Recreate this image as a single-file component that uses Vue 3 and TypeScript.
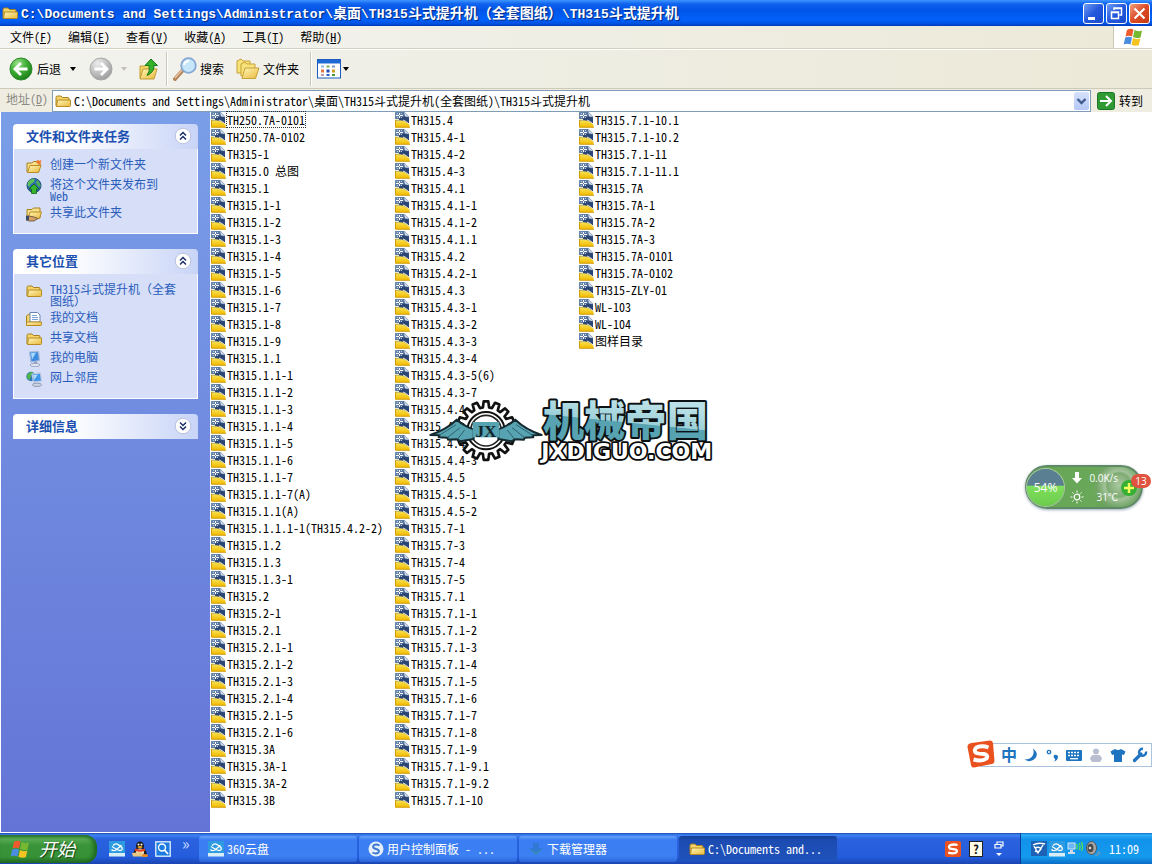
<script setup lang="ts">
import { h, ref } from 'vue'

interface Run { text: string; wide: boolean }
interface MenuEntry { label: string; key: string }
interface Place { icon: string; label: string }
interface Task { icon: string; label: string; active?: boolean }

const path = 'C:\\Documents and Settings\\Administrator\\桌面\\TH315斗式提升机（全套图纸）\\TH315斗式提升机'
const address = ref(path)

function splitRuns(text: string): Run[] {
  const parts = text.match(/[\u0000-\u00ff]+|[^\u0000-\u00ff]+/g) ?? []
  return parts.map((t) => ({ text: t, wide: t.charCodeAt(0) > 255 }))
}

const Mixed = (props: { text: string }) =>
  h('span', splitRuns(props.text).map((r) => h('span', { class: r.wide ? 'wide' : 'latin' }, r.text)))
Mixed.props = ['text']

const menus: MenuEntry[] = [
  { label: '文件', key: 'F' },
  { label: '编辑', key: 'E' },
  { label: '查看', key: 'V' },
  { label: '收藏', key: 'A' },
  { label: '工具', key: 'T' },
  { label: '帮助', key: 'H' },
]

const fileTasks: Place[] = [
  { icon: 'i-newfolder', label: '创建一个新文件夹' },
  { icon: 'i-globe', label: '将这个文件夹发布到 Web' },
  { icon: 'i-share', label: '共享此文件夹' },
]
const places: Place[] = [
  { icon: 'i-folder', label: 'TH315斗式提升机（全套图纸）' },
  { icon: 'i-docs', label: '我的文档' },
  { icon: 'i-folder', label: '共享文档' },
  { icon: 'i-computer', label: '我的电脑' },
  { icon: 'i-network', label: '网上邻居' },
]

const files: string[] = [
  'TH250.7A-0101', 'TH250.7A-0102', 'TH315-1', 'TH315.0 总图', 'TH315.1', 'TH315.1-1', 'TH315.1-2', 'TH315.1-3',
  'TH315.1-4', 'TH315.1-5', 'TH315.1-6', 'TH315.1-7', 'TH315.1-8', 'TH315.1-9', 'TH315.1.1', 'TH315.1.1-1',
  'TH315.1.1-2', 'TH315.1.1-3', 'TH315.1.1-4', 'TH315.1.1-5', 'TH315.1.1-6', 'TH315.1.1-7', 'TH315.1.1-7(A)',
  'TH315.1.1(A)', 'TH315.1.1.1-1(TH315.4.2-2)', 'TH315.1.2', 'TH315.1.3', 'TH315.1.3-1', 'TH315.2', 'TH315.2-1',
  'TH315.2.1', 'TH315.2.1-1', 'TH315.2.1-2', 'TH315.2.1-3', 'TH315.2.1-4', 'TH315.2.1-5', 'TH315.2.1-6',
  'TH315.3A', 'TH315.3A-1', 'TH315.3A-2', 'TH315.3B',
  'TH315.4', 'TH315.4-1', 'TH315.4-2', 'TH315.4-3', 'TH315.4.1', 'TH315.4.1-1', 'TH315.4.1-2', 'TH315.4.1.1',
  'TH315.4.2', 'TH315.4.2-1', 'TH315.4.3', 'TH315.4.3-1', 'TH315.4.3-2', 'TH315.4.3-3', 'TH315.4.3-4',
  'TH315.4.3-5(6)', 'TH315.4.3-7', 'TH315.4.4', 'TH315.4.4-1', 'TH315.4.4-2', 'TH315.4.4-3', 'TH315.4.5',
  'TH315.4.5-1', 'TH315.4.5-2', 'TH315.7-1', 'TH315.7-3', 'TH315.7-4', 'TH315.7-5', 'TH315.7.1', 'TH315.7.1-1',
  'TH315.7.1-2', 'TH315.7.1-3', 'TH315.7.1-4', 'TH315.7.1-5', 'TH315.7.1-6', 'TH315.7.1-7', 'TH315.7.1-8',
  'TH315.7.1-9', 'TH315.7.1-9.1', 'TH315.7.1-9.2', 'TH315.7.1-10',
  'TH315.7.1-10.1', 'TH315.7.1-10.2', 'TH315.7.1-11', 'TH315.7.1-11.1', 'TH315.7A', 'TH315.7A-1', 'TH315.7A-2',
  'TH315.7A-3', 'TH315.7A-0101', 'TH315.7A-0102', 'TH315-ZLY-01', 'WL-103', 'WL-104', '图样目录',
]

const tasks: Task[] = [
  { icon: 'i-cloud', label: '360云盘' },
  { icon: 'i-sbrowser', label: '用户控制面板 - ...' },
  { icon: 'i-down', label: '下载管理器' },
  { icon: 'i-folder', label: 'C:\\Documents and...', active: true },
]

const open = ref({ tasks: true, places: true, details: false })

function gearPath(cx: number, cy: number, inner: number, outer: number, teeth: number): string {
  const pts: string[] = []
  const step = (Math.PI * 2) / teeth
  for (let i = 0; i < teeth; i++) {
    const a = i * step - Math.PI / 2
    const corners: [number, number][] = [
      [-0.34, inner], [-0.2, outer], [0.2, outer], [0.34, inner],
    ]
    for (const [f, r] of corners) {
      pts.push(`${(cx + Math.cos(a + f * step) * r).toFixed(1)} ${(cy + Math.sin(a + f * step) * r).toFixed(1)}`)
    }
  }
  return `M${pts.join('L')}Z`
}
const gear = gearPath(198, 122, 70, 88, 16)
</script>

<template>
  <div class="desktop">
    <svg class="defs" width="0" height="0" aria-hidden="true">
      <defs>
        <linearGradient id="gFold" x1="0" y1="0" x2="1" y2="1"><stop offset="0" stop-color="#fff6b8" /><stop offset="1" stop-color="#e9b93c" /></linearGradient>
        <radialGradient id="gGreen" cx=".35" cy=".25" r=".8"><stop offset="0" stop-color="#9be08a" /><stop offset=".5" stop-color="#3fae35" /><stop offset="1" stop-color="#1a7c18" /></radialGradient>
        <radialGradient id="gGray" cx=".35" cy=".25" r=".8"><stop offset="0" stop-color="#ececec" /><stop offset=".6" stop-color="#bcbcbc" /><stop offset="1" stop-color="#999" /></radialGradient>
        <linearGradient id="gYel" x1="0" y1="0" x2="0" y2="1"><stop offset="0" stop-color="#f8e25a" /><stop offset="1" stop-color="#f2bc00" /></linearGradient>
        <linearGradient id="gPage" x1="0" y1="0" x2="1" y2="1"><stop offset="0" stop-color="#6f8fb4" /><stop offset="1" stop-color="#2c4876" /></linearGradient>
        <linearGradient id="gTeal" gradientUnits="userSpaceOnUse" x1="641" y1="40" x2="629" y2="160"><stop offset="0" stop-color="#b9e0e6" /><stop offset=".48" stop-color="#9ed0d9" /><stop offset=".5" stop-color="#57a3b1" /><stop offset="1" stop-color="#57a3b1" /></linearGradient>
      </defs>
      <symbol id="i-folder" viewBox="0 0 16 16">
        <path d="M1 13V4.500Q1 3 2.500 3H6L7.500 4.500H13Q14 4.500 14 6V13Z" fill="#f3d468" stroke="#a87f1f" />
        <path d="M1.500 13.500L2.500 7H15.500V12.500Q15.500 13.500 14.500 13.500Z" fill="url(#gFold)" stroke="#b88c22" />
      </symbol>
      <symbol id="i-newfolder" viewBox="0 0 16 16">
        <path d="M1 14V5H6L7.500 3.500H13V13Z" fill="#f6e08a" stroke="#a87f1f" />
        <path d="M1.500 14.500L4 7.500H15L12.500 14.500Z" fill="url(#gFold)" stroke="#b88c22" />
        <path d="M10 4L12 1.500L13 3L15.500 2L14.500 5L15.500 7L12 6Z" fill="#f07a2a" />
      </symbol>
      <symbol id="i-share" viewBox="0 0 16 16">
        <path d="M1 12V3.500H6L7.500 2H14V12Z" fill="#f6e08a" stroke="#a87f1f" />
        <path d="M2 12.500L4 6H15.500L13.500 12.500Z" fill="url(#gFold)" stroke="#b88c22" />
        <path d="M0 10H3L8 11L12 12.500L8 15H3L0 14Z" fill="#d9a066" stroke="#5a4a3a" stroke-width=".8" />
        <path d="M0 10H3V14H0Z" fill="#3a4a6a" />
      </symbol>
      <symbol id="i-globe" viewBox="0 0 16 16">
        <circle cx="8" cy="7.500" r="7" fill="#2c6ab4" stroke="#1d4a80" />
        <path d="M2 4Q5 0 9 1L8 4L5 6L3 9L1.500 7Z" fill="#5cc05a" /><path d="M11 2Q15 5 14.500 9L12 8L10 5Z" fill="#4caf50" />
        <path d="M8 6L13 11H10.500V15.500H5.500V11H3Z" fill="#35b52e" stroke="#176312" stroke-width=".8" />
      </symbol>
      <symbol id="i-docs" viewBox="0 0 16 16">
        <path d="M.5 14V5L3 3H5V14Z" fill="#f3d468" stroke="#a87f1f" />
        <path d="M4 11V1.500H11.500L14 4V11Z" fill="#fff" stroke="#6a86b4" /><path d="M6 4.500H11M6 6.500H12M6 8.500H12" stroke="#7aa0d8" />
        <path d="M.5 14.500V11H15.500V13.500Q15.500 14.500 14.500 14.500Z" fill="url(#gFold)" stroke="#b88c22" />
      </symbol>
      <symbol id="i-computer" viewBox="0 0 16 16">
        <path d="M3.500 1L12.500 .5L13.500 9.500L5 11Z" fill="#3c8be0" stroke="#a8bcdc" stroke-width="1.200" /><path d="M5 2L10 1.800L6 8.500Z" fill="#a6d8fb" />
        <path d="M8 11L11 10.500V13H8Z" fill="#8e9cb8" /><ellipse cx="9" cy="14" rx="5" ry="1.700" fill="#dfe4ee" stroke="#8e9cb8" stroke-width=".8" />
      </symbol>
      <symbol id="i-network" viewBox="0 0 16 16">
        <circle cx="5" cy="5.500" r="4.700" fill="#3478bc" /><path d="M1 4Q4 0 7 1.500L5 5L4 9L1 7Z" fill="#4fb24c" />
        <path d="M6 3L14.500 2L15.500 10L7.500 11Z" fill="#3f95ea" stroke="#c2cde0" stroke-width="1.200" /><path d="M7 4L12 3.500L8 9Z" fill="#b0defb" />
        <ellipse cx="11" cy="13.800" rx="4.600" ry="1.700" fill="#cdd3e0" stroke="#7e8aa4" stroke-width=".8" />
      </symbol>
      <symbol id="i-dwg" viewBox="0 0 16 16">
        <path d="M0 0H9.500L14 4.500V15H0Z" fill="url(#gPage)" />
        <path d="M9 0L14 5L10 4.500Z" fill="#d4deea" />
        <path d="M5 6Q9 3 14 6V13Q10 9 3 8.500Z" fill="#2b4674" />
        <path d="M.5 15V8.500Q8 7 14.500 12V15Z" fill="url(#gYel)" />
        <path d="M8 8Q11 9 14.500 12.500" fill="none" stroke="#f4f1d8" />
        <path d="M.5 8V15.300H15" fill="none" stroke="#cf9c08" />
        <path d="M4 1H5V3H4ZM4 4H5V6H4ZM1 3H4V4H1ZM5 3H8V4H5Z" fill="#fff" />
        <path d="M2 1H3V2H2ZM6 1H7V2H6ZM2 5H3V6H2ZM6 5H7V6H6Z" fill="#b8c8dc" />
        <path d="M0 7H4V8H0Z" fill="#efe9c0" />
      </symbol>
      <symbol id="i-back" viewBox="0 0 24 24">
        <circle cx="12" cy="12" r="11" fill="url(#gGreen)" stroke="#2c8a28" /><path d="M12 6L6 12L12 18M6.500 12H18.500" fill="none" stroke="#fff" stroke-width="2.800" />
      </symbol>
      <symbol id="i-fwd" viewBox="0 0 24 24">
        <circle cx="12" cy="12" r="11" fill="url(#gGray)" stroke="#a8a8a8" /><path d="M12 6L18 12L12 18M17.500 12H5.500" fill="none" stroke="#fff" stroke-width="2.800" />
      </symbol>
      <symbol id="i-up" viewBox="0 0 20 22">
        <path d="M1 20V8H6L8 6H14V20Z" fill="#f3d468" stroke="#c09a30" /><path d="M1 21L4 11H18L15 21Z" fill="url(#gFold)" stroke="#c09a30" />
        <path d="M12 1L18.500 7.500H15Q15.500 14 8 17.500Q11.500 13 10 7.500H6Z" fill="#36b12c" stroke="#157a14" />
      </symbol>
      <symbol id="i-search" viewBox="0 0 24 24">
        <path d="M2 22L10 13" stroke="#b5835a" stroke-width="4" stroke-linecap="round" /><path d="M2 21L9 13" stroke="#e6c3a2" stroke-width="1.500" />
        <circle cx="15.500" cy="8.500" r="7.300" fill="#c6e6fa" stroke="#86a8d4" stroke-width="1.800" /><path d="M11 8Q12 4 16 4" stroke="#fff" stroke-width="2" fill="none" />
      </symbol>
      <symbol id="i-folders" viewBox="0 0 24 22">
        <path d="M1 15V3L5 1L7 3H14V15Z" fill="#f8e27c" stroke="#c7a136" /><path d="M5 18V6L9 4L11 6H19V18Z" fill="#f8e27c" stroke="#c7a136" />
        <path d="M6 20.500L9 10H23L19.500 20.500Z" fill="url(#gFold)" stroke="#c7a136" />
      </symbol>
      <symbol id="i-views" viewBox="0 0 24 20">
        <rect x=".5" y=".5" width="23" height="18.500" fill="#fff" stroke="#1b5ec0" /><rect x="1" y="1" width="22" height="3.500" fill="#1f69d4" />
        <path d="M4 6.500H7V8.500H4Z" fill="#9bb4dc" /><path d="M9.500 6.500H12.500V8.500H9.500Z" fill="#7a5" /><path d="M15 6.500H18V8.500H15Z" fill="#79b" />
        <path d="M4 10.500H7V13.500H4Z" fill="#e07840" /><path d="M9.500 10.500H12.500V13.500H9.500Z" fill="#1c48b0" /><path d="M15 10.500H18V13.500H15Z" fill="#d0a020" />
        <path d="M4 15H7V17H4Z" fill="#b9a" /><path d="M9.500 15H12.500V17H9.500Z" fill="#2a60c8" /><path d="M15 15H18V17H15Z" fill="#4c9a3c" />
      </symbol>
      <symbol id="i-flag" viewBox="0 0 20 18">
        <path d="M4 2Q7 0 10.500 1.500L9 8.500Q6 7 2.500 8.500Z" fill="#ee5a2c" /><path d="M11.500 2Q15 4 19 2.500L17.500 9.500Q14 11 10 9Z" fill="#76b830" />
        <path d="M2.200 9.500Q5.500 8 9 9.500L7.500 16.500Q4 15 .7 16.500Z" fill="#4a8ce0" /><path d="M10 10Q13.500 12 17.300 10.500L15.800 17.300Q12 18.500 8.500 16.800Z" fill="#f6c420" />
      </symbol>
      <symbol id="i-cloud" viewBox="0 0 16 16">
        <rect width="16" height="12" fill="#2e9be0" /><rect y="12" width="16" height="3.500" fill="#d9edf9" />
        <path d="M4 4.500Q6.500 2 9 3.500L13 6.500Q14 9.500 11 9.500Q9 9.500 3 5.500M12.500 4.500Q9 7 7 9Q4 10.500 2.500 8.500" fill="none" stroke="#fff" stroke-width="1.300" />
      </symbol>
      <symbol id="i-sbrowser" viewBox="0 0 16 16">
        <circle cx="8" cy="8" r="7.500" fill="#e4eefc" /><path d="M11.500 4.500Q8 2.500 5.500 4.500Q4 7 8 8Q12 9 10.500 11.500Q8 13.500 4.500 11.500" fill="none" stroke="#3d78d0" stroke-width="2" />
      </symbol>
      <symbol id="i-down" viewBox="0 0 16 16"><path d="M5 2H11V7H15L8 14L1 7H5Z" fill="#2f78d4" /><path d="M2 8L8 14L14 8L8 11Z" fill="#3a8cb0" /></symbol>
      <symbol id="i-penguin" viewBox="0 0 16 16">
        <ellipse cx="8" cy="5" rx="4" ry="4.500" fill="#1d1a1a" /><path d="M3 8Q8 5 13 8L15 13H1Z" fill="#1d1a1a" /><ellipse cx="8" cy="11" rx="4" ry="3.500" fill="#f4efe0" />
        <path d="M3 7.500Q8 9.500 13 7.500V10Q8 11.500 3 10Z" fill="#e0401c" /><ellipse cx="8" cy="6" rx="2.500" ry="1" fill="#f2b01e" /><circle cx="6.500" cy="3.500" r="1" fill="#fff" /><circle cx="9.500" cy="3.500" r="1" fill="#fff" />
        <path d="M0 12L9 11L12 14V15.500H1Z" fill="#e8c880" /><ellipse cx="13" cy="14.500" rx="3" ry="1.500" fill="#f08a1e" />
      </symbol>
      <symbol id="i-find" viewBox="0 0 16 16"><rect x=".8" y=".8" width="14.400" height="14.400" fill="#1c7be0" stroke="#e6f2fd" stroke-width="1.300" /><circle cx="7" cy="6.500" r="3.500" fill="none" stroke="#fff" stroke-width="1.400" /><path d="M9.500 9L13 13" stroke="#fff" stroke-width="1.800" /></symbol>
      <symbol id="i-sogou" viewBox="0 0 28 28">
        <path d="M4.500 3L23 .5Q25.500 .3 26 3L27.500 21Q27.500 23.500 25 24L7 27.500Q4.500 27.800 4 25L.5 7Q.3 3.800 4.500 3Z" fill="#e9521f" />
        <path d="M21.500 7.500Q15 5 9.500 7.500Q6 10.500 9.500 13Q12 14 17 14Q21.500 15 19.500 18.500Q15 22 6.500 19.500" fill="none" stroke="#fff" stroke-width="4" />
      </symbol>
      <symbol id="i-chev" viewBox="0 0 18 18"><circle cx="9" cy="9" r="7.800" fill="#fff" stroke="#b9c2de" /><path d="M6 8.500L9 5.500L12 8.500M6 12.500L9 9.500L12 12.500" fill="none" stroke="#1b2f66" stroke-width="1.500" /></symbol>
    </svg>

    <header class="titlebar">
      <svg class="ic16"><use href="#i-folder" /></svg>
      <h1><Mixed :text="path" /></h1>
      <button class="win" aria-label="最小化"><svg viewBox="0 0 19 19"><path d="M4 13H11V16H4Z" fill="#fff" /></svg></button>
      <button class="win" aria-label="还原"><svg viewBox="0 0 19 19"><path d="M7 6V4H14.500V11H12.500M7 4.500H14.500M4.500 8H11.500V14.500H4.500ZM4 8.500H12" fill="none" stroke="#fff" stroke-width="1.500" /></svg></button>
      <button class="win close" aria-label="关闭"><svg viewBox="0 0 19 19"><path d="M4.500 4.500L14.500 14.500M14.500 4.500L4.500 14.500" stroke="#fff" stroke-width="2.200" /></svg></button>
    </header>

    <nav class="menubar">
      <button v-for="m in menus" :key="m.key">{{ m.label }}(<u>{{ m.key }}</u>)</button>
      <span class="brand"><svg><use href="#i-flag" /></svg></span>
    </nav>

    <div class="toolbar">
      <button class="tool back"><svg class="ic24"><use href="#i-back" /></svg><span>后退</span></button>
      <button class="drop first" aria-label="后退列表"></button>
      <button class="tool" aria-label="前进"><svg class="ic24"><use href="#i-fwd" /></svg></button>
      <button class="drop pale" aria-label="前进列表"></button>
      <button class="tool up" aria-label="向上"><svg class="ic22"><use href="#i-up" /></svg></button>
      <i class="sep"></i>
      <button class="tool"><svg class="ic24"><use href="#i-search" /></svg><span>搜索</span></button>
      <button class="tool folders"><svg class="ic24"><use href="#i-folders" /></svg><span>文件夹</span></button>
      <i class="sep"></i>
      <button class="tool" aria-label="查看"><svg class="ic24"><use href="#i-views" /></svg></button>
      <button class="drop near" aria-label="查看方式"></button>
    </div>

    <form class="addressbar" @submit.prevent>
      <label for="addr">地址(<u>D</u>)</label>
      <div class="combo">
        <svg class="ic16"><use href="#i-folder" /></svg>
        <input id="addr" v-model="address" type="text" spellcheck="false" />
        <button type="button" class="comboBtn" aria-label="展开"><svg viewBox="0 0 15 18"><path d="M3.500 7L7.500 11L11.500 7" fill="none" stroke="#3f5c8c" stroke-width="2.400" /></svg></button>
      </div>
      <button class="go"><svg viewBox="0 0 18 18"><rect x=".5" y=".5" width="17" height="17" rx="2" fill="#2f9a34" stroke="#1f7526" /><path d="M3 9H14M9 4L14 9L9 14" fill="none" stroke="#fff" stroke-width="2" /></svg><span>转到</span></button>
    </form>

    <main class="content">
      <aside class="pane">
        <section class="box">
          <button class="boxHead" @click="open.tasks = !open.tasks"><span>文件和文件夹任务</span><svg class="ic18"><use href="#i-chev" /></svg></button>
          <ul v-if="open.tasks" class="boxBody">
            <li v-for="t in fileTasks" :key="t.label"><a href="#"><svg class="ic16"><use :href="'#' + t.icon" /></svg><Mixed :text="t.label" /></a></li>
          </ul>
        </section>
        <section class="box">
          <button class="boxHead" @click="open.places = !open.places"><span>其它位置</span><svg class="ic18"><use href="#i-chev" /></svg></button>
          <ul v-if="open.places" class="boxBody">
            <li v-for="p in places" :key="p.label"><a href="#"><svg class="ic16"><use :href="'#' + p.icon" /></svg><Mixed :text="p.label" /></a></li>
          </ul>
        </section>
        <section class="box">
          <button class="boxHead" @click="open.details = !open.details"><span>详细信息</span><svg class="ic18 flip"><use href="#i-chev" /></svg></button>
        </section>
      </aside>

      <ul class="files">
        <li v-for="(f, i) in files" :key="f" :class="{ focused: i === 0 }"><svg class="ic16"><use href="#i-dwg" /></svg><span>{{ f }}</span></li>
      </ul>
    </main>

    <svg class="watermark" viewBox="0 0 930 240" role="img" aria-label="机械帝国 JXDIGUO.COM">
      <path :d="gear" fill="#fff" stroke="#111" stroke-width="8" stroke-linejoin="round" />
      <circle cx="198" cy="122" r="56" fill="#fff" stroke="#111" stroke-width="6" />
      <circle cx="198" cy="122" r="46" fill="none" stroke="#222" stroke-width="5" />
      <g fill="#57a3b1" stroke="#152a30" stroke-width="6" stroke-linejoin="round">
        <path d="M110 89Q132 108 161 118V147L121 154L112 148L84 149L82 143L56 142L58 136L31 135Q80 118 110 89Z" />
        <path d="M286 89Q264 108 235 118V147L275 154L284 148L312 149L314 143L340 142L338 136L365 135Q316 118 286 89Z" />
        <path d="M158 96H238V142H158Z" stroke="none" />
      </g>
      <path d="M108 104L58 136M120 113L82 143M134 120L112 148M288 104L338 136M276 113L314 143M262 120L284 148" stroke="#2d626c" stroke-width="3" />
      <text x="198" y="142" class="jx">JX</text>
      <text x="368" y="139" class="cn">机械帝国</text>
      <text x="364" y="206" class="en">JXDIGUO.COM</text>
    </svg>

    <div class="meter">
      <span class="pct">54%</span>
      <div class="stats">
        <svg viewBox="0 0 14 14"><path d="M5 1H9V7H12L7 12.500L2 7H5Z" fill="#fff" /></svg><span>0.0K/s</span>
        <svg viewBox="0 0 14 14"><circle cx="7" cy="7" r="2.800" fill="none" stroke="#fff" stroke-width="1.200" /><path d="M7 .5V2.500M7 11.500V13.500M.5 7H2.500M11.500 7H13.500M2.400 2.400L3.600 3.600M10.400 10.400L11.600 11.600M2.400 11.600L3.600 10.400M10.400 3.600L11.600 2.400" stroke="#fff" /></svg><span>31℃</span>
      </div>
      <span class="plus"><svg viewBox="0 0 14 14"><path d="M7 2V12M2 7H12" stroke="#f4ff5a" stroke-width="2.500" /></svg></span>
      <span class="badge">13</span>
    </div>

    <div class="ime">
      <svg class="imeLogo"><use href="#i-sogou" /></svg>
      <button class="cn2">中</button>
      <button aria-label="半角"><svg viewBox="0 0 16 16"><path d="M10 1.500Q16 6 12.500 11Q8 16.500 1.500 12.500Q7 12.500 9.500 9Q11.500 5.500 10 1.500Z" fill="#1f74c0" /></svg></button>
      <button aria-label="标点"><svg viewBox="0 0 16 16"><circle cx="4" cy="5" r="1.700" fill="none" stroke="#1f74c0" stroke-width="1.300" /><path d="M9 8Q12.500 7 13 9.500Q13 13.500 9 14.500Q11 12.500 9.500 11.500Q8 10 9 8Z" fill="#1f74c0" /></svg></button>
      <button aria-label="软键盘"><svg viewBox="0 0 16 16"><rect y="3" width="16" height="11" rx="1" fill="#1f74c0" /><path d="M2 5.500H14M2 8.500H14" stroke="#fff" stroke-width="1.500" stroke-dasharray="2 1" /><path d="M4 11.700H12" stroke="#fff" stroke-width="1.300" /></svg></button>
      <button aria-label="账户"><svg viewBox="0 0 16 16"><circle cx="8" cy="4.500" r="3" fill="#b9bfd0" /><path d="M2 12Q3 7.500 6 8H10Q13 7.500 14 12L12 15H4Z" fill="#b9bfd0" /></svg></button>
      <button aria-label="皮肤"><svg viewBox="0 0 16 16"><path d="M5 2Q8 4 11 2L15.500 4.500L14 8L12 7.500V15H4V7.500L2 8L.5 4.500Z" fill="#1f74c0" /></svg></button>
      <button aria-label="设置"><svg viewBox="0 0 16 16"><path d="M2.500 13.500L9 7" stroke="#1f74c0" stroke-width="3.200" stroke-linecap="round" /><path d="M14 4.500A3.500 3.500 0 1 1 11 1.800" fill="none" stroke="#1f74c0" stroke-width="2.400" /></svg></button>
    </div>

    <footer class="taskbar">
      <button class="start"><svg><use href="#i-flag" /></svg><span>开始</span></button>
      <div class="quick">
        <button aria-label="云盘"><svg class="ic16"><use href="#i-cloud" /></svg></button>
        <button aria-label="QQ"><svg class="ic16"><use href="#i-penguin" /></svg></button>
        <button aria-label="搜索"><svg class="ic16"><use href="#i-find" /></svg></button>
        <span class="more">»</span>
      </div>
      <div class="tasks">
        <button v-for="t in tasks" :key="t.label" class="task" :class="{ active: t.active }"><svg class="ic16"><use :href="'#' + t.icon" /></svg><span>{{ t.label }}</span></button>
      </div>
      <div class="lang">
        <svg class="ic16" viewBox="0 0 28 28"><rect width="28" height="28" rx="3" fill="#e9521f" /><path d="M22 7Q15 5 8.500 7.500Q5 10.500 9 13.500L19 15Q23 17.500 19 20.500Q14 22.500 5.500 20.500" fill="none" stroke="#fff" stroke-width="4" /></svg>
        <span class="help">?</span>
        <svg class="ic16" viewBox="0 0 16 16"><path d="M6 3V1H12V5H10M4 3.500H10V7H4Z" fill="none" stroke="#fff" stroke-width="1.200" /><path d="M5 12H11L8 15Z" fill="#fff" /></svg>
      </div>
      <div class="tray">
        <svg class="ic16" viewBox="0 0 16 16"><rect width="16" height="15" fill="#1d62b4" /><path d="M2 4Q7 1 14 3M3 5L7 12L12 4M4 7Q8 5 10 8Q8 12 4 10" fill="none" stroke="#fff" stroke-width="1.400" /></svg>
        <svg class="ic16"><use href="#i-cloud" /></svg>
        <svg class="ic16" viewBox="0 0 16 16"><rect x="1" y="2" width="7" height="6" fill="#6ab6f4" stroke="#d3e4f5" /><path d="M3 9H6V11H8V13H1V11H3Z" fill="#cfdbe8" /><path d="M9.500 3Q11 5.500 9.500 8M12 2Q14 5.500 12 9M14.500 1Q16.500 5.500 14.500 10" fill="none" stroke="#52e052" stroke-width="1.300" /></svg>
        <svg class="ic16" viewBox="0 0 16 16"><ellipse cx="6.500" cy="7" rx="5" ry="6.500" fill="#a8a8a8" stroke="#555" /><ellipse cx="5.500" cy="7" rx="3" ry="4.300" fill="#4a4a4a" /><circle cx="5" cy="7" r="1.300" fill="#ddd" /><path d="M12 13L15 10M10 15L15.500 12.500" stroke="#8899aa" /></svg>
        <time>11:09</time>
      </div>
    </footer>
  </div>
</template>

<style>
html, body { margin: 0; }
.wide { font-feature-settings: normal; }
h1 .latin { font-family: "Liberation Mono", monospace; font-size: 13px; }
</style>

<style scoped>
.desktop {
  position: relative; display: flex; flex-direction: column; min-height: 100vh; overflow: hidden;
  background: #fff; color: #000; font: 12px/16px "Noto Sans CJK SC", sans-serif; font-feature-settings: "hwid" 1;
}
.defs { position: absolute; }
button { border: 0; padding: 0; margin: 0; background: none; font: inherit; font-feature-settings: inherit; color: inherit; cursor: pointer; display: flex; align-items: center; }
ul { list-style: none; margin: 0; padding: 0; }
svg { display: block; flex: none; }
.ic16 { width: 16px; height: 16px; }
.ic18 { width: 18px; height: 18px; }
.ic22 { width: 20px; height: 22px; }
.ic24 { width: 24px; height: 24px; }
.flip { transform: rotate(180deg); }

.titlebar {
  display: flex; align-items: center; gap: 2px; height: 26px; padding: 0 2px; box-sizing: border-box;
  background: linear-gradient(#3d95ff 0, #0f63ee 4px, #0254e6 10px, #0262fb 20px, #0150dc 24px, #0038b8);
}
.titlebar h1 { flex: 1; margin: 0; padding-left: 1px; white-space: pre; color: #fff; font-size: 14px; line-height: 20px; font-weight: 700; text-shadow: 1px 1px 1px #03257a; }
.win { width: 21px; height: 21px; box-sizing: border-box; border: 1px solid #fff; border-radius: 3px; background: linear-gradient(135deg, #6f9cf4, #2458dc 50%, #1a4ccc); }
.win svg { width: 19px; height: 19px; }
.close { background: linear-gradient(135deg, #f0a080, #dd4a26 50%, #c43a14); }

.menubar { display: flex; height: 23px; padding-left: 2px; box-sizing: border-box; background: linear-gradient(90deg, #f5f5f3, #efeee4 50%, #ece9d8); border-bottom: 1px solid #d3d0c0; }
.menubar button { padding: 0 8px; }
.brand { margin-left: auto; width: 38px; display: flex; align-items: center; justify-content: center; background: #fff; border-left: 1px solid #c9c6b6; }
.brand svg { width: 20px; height: 18px; }

.toolbar { display: flex; align-items: center; height: 40px; padding-left: 9px; box-sizing: border-box; background: linear-gradient(90deg, #f3f3ef, #eeede2 50%, #ece9d8); border-top: 1px solid #fff; border-bottom: 1px solid #cdcaba; }
.tool { gap: 3px; }
.back { gap: 4px; }
.up { margin-left: 4px; }
.folders { margin-left: 12px; }
.drop { width: 28px; height: 24px; justify-content: center; }
.drop::after { content: ""; border: 3px solid transparent; border-top: 4px solid #000; border-bottom: 0; }
.first { padding-right: 4px; }
.pale { width: 22px; }
.pale::after { border-top-color: #c4c2b8; }
.near { width: 10px; }
.sep { width: 1px; height: 34px; margin: 0 6px 0 7px; background: #cbc8b8; box-shadow: 1px 0 #fff; }
.sep:last-of-type { margin-left: 11px; }

.addressbar { display: flex; align-items: stretch; height: 23px; background: #efede2; box-sizing: border-box; }
.addressbar label { width: 46px; padding-left: 6px; line-height: 20px; color: #8a8a82; box-sizing: border-box; white-space: nowrap; }
.combo { flex: 1; margin-left: 6px; display: flex; align-items: center; gap: 3px; min-width: 0; padding: 0 1px 0 2px; background: #fff; border: 1px solid #7f9db9; margin-top: 1px; }
.combo input { flex: 1; min-width: 0; border: 0; padding: 0; outline: 0; background: none; font: inherit; font-feature-settings: inherit; color: #000; }
.comboBtn { width: 15px; height: 18px; background: linear-gradient(#d6e2fd, #b4c8f6); border-radius: 2px; }
.comboBtn svg { width: 15px; height: 18px; }
.go { gap: 4px; padding: 0 9px 0 6px; }
.go svg { width: 18px; height: 18px; }

.content { flex: 1; display: flex; padding-bottom: 1px; }
.pane { flex: none; width: 210px; box-sizing: border-box; padding: 12px; border-left: 1px solid #fff; background: linear-gradient(#7a9ee8, #6474d6); }
.box { margin-bottom: 15px; }
.boxHead { width: 100%; height: 25px; box-sizing: border-box; padding: 0 6px 2px 13px; justify-content: space-between; border-radius: 4px 4px 0 0; background: linear-gradient(90deg, #fff 30%, #c8d4f7); color: #1b50b0; font-weight: 700; font-size: 13px; }
.boxBody { display: flex; flex-direction: column; gap: 4px; padding: 9px 20px 11px 12px; background: #d6dff7; border: 1px solid #fff; border-top: 0; }
.boxBody a { display: flex; gap: 8px; color: #2a5cbc; text-decoration: none; line-height: 12px; }

.files { flex: 1; display: grid; grid-auto-flow: column; grid-template-rows: repeat(41, 17px); grid-auto-columns: 184px; align-content: start; padding-left: 1px; }
.files li { display: flex; align-items: flex-start; white-space: pre; }
.files li span { line-height: 15px; }
.focused span { outline: 1px dotted #333; }

.watermark { position: absolute; left: 420px; top: 390px; width: 310px; height: 80px; overflow: visible; }
.jx { font: 700 52px "Liberation Serif", serif; text-anchor: middle; fill: #12262b; }
.cn { font: 900 124px "Noto Sans CJK SC", sans-serif; fill: url(#gTeal); stroke: #0c1214; stroke-width: 12px; paint-order: stroke; stroke-linejoin: round; }
.en { font: 700 66px "DejaVu Sans", sans-serif; fill: #fff; stroke: #0a0a0a; stroke-width: 11px; paint-order: stroke; stroke-linejoin: round; }

.meter { position: absolute; right: 9px; top: 465px; width: 118px; height: 44px; border-radius: 22px; box-sizing: border-box; border: 2px solid #5f8a66; background: radial-gradient(circle at 92px 18px, #a9c8a0 0, #7fab74 12px, #a3c39a 14px, #74a568 22px, transparent 26px), linear-gradient(100deg, #63a552, #6aa85a 60%, #5d8f58); display: flex; align-items: center; color: #fff; box-shadow: 0 1px 3px #9ab; font-family: "Open Sans", "Noto Sans CJK SC", sans-serif; font-feature-settings: normal; }
.pct { width: 37px; height: 37px; border-radius: 50%; line-height: 38px; text-align: center; background: linear-gradient(#5b7f92 44%, #7fe05c 46%, #6ccb4c); font-size: 12px; box-shadow: 0 0 0 1px #a9c8a4; }
.stats { flex: 1; display: grid; grid-template-columns: 14px 1fr; row-gap: 3px; align-items: center; padding: 0 23px 0 6px; font-size: 10px; text-align: right; }
.stats svg { width: 14px; height: 14px; }
.plus { position: absolute; right: 4px; top: 13px; width: 16px; height: 16px; border-radius: 50%; background: #35b035; }
.plus svg { width: 14px; height: 14px; margin: 1px; }
.badge { position: absolute; right: -10px; top: 7px; width: 20px; height: 14px; border-radius: 7px; background: #e0543f; font-size: 10px; line-height: 14px; text-align: center; }

.ime { position: absolute; right: 0; top: 743px; display: flex; align-items: center; height: 24px; width: 172px; box-sizing: border-box; padding-left: 20px; justify-content: space-between; padding-right: 3px; border: 1px solid #a9c4dc; background: #fff; }
.ime button, .ime button svg { width: 16px; height: 16px; }
.ime .cn2 { color: #1f74c0; font-weight: 700; font-size: 16px; line-height: 16px; padding-bottom: 2px; }
.imeLogo { position: absolute; left: -14px; top: -4px; width: 28px; height: 28px; }

.taskbar { display: flex; align-items: stretch; height: 31px; color: #fff; background: linear-gradient(#1d48b4 0, #3f83f2 2px, #2a62de 6px, #245cdc 24px, #1a44b0); }
.start { width: 97px; margin: 2px 0 1px; padding-left: 10px; gap: 9px; border-radius: 0 12px 12px 0; background: linear-gradient(#2f7a2f, #57ab55 4px, #3a943a 10px, #369236 22px, #246a24); box-shadow: inset -3px 0 4px #1d661d; font-size: 18px; line-height: 24px; font-style: italic; text-shadow: 1px 1px 1px #173f17; }
.start svg { width: 20px; height: 18px; }
.start span { padding-bottom: 3px; }
.quick { width: 102px; box-sizing: border-box; padding: 0 8px 0 12px; display: flex; align-items: center; gap: 7px; }
.more { align-self: flex-start; margin-left: 4px; line-height: 20px; font-size: 16px; color: #c6dafc; font-feature-settings: normal; }
.tasks { flex: 1; display: flex; gap: 2px; padding: 3px 0 2px; min-width: 0; }
.task { width: 158px; padding-left: 9px; gap: 3px; border-radius: 3px; background: linear-gradient(#6aa0fa, #3b7df2 4px, #3c80f4 20px, #2c66d8); white-space: pre; }
.active { background: linear-gradient(#153f98, #1c4cb2 5px, #1f52bc); padding-left: 10px; }
.lang { display: flex; align-items: center; gap: 6px; padding-right: 13px; }
.help { width: 12px; height: 14px; margin: 0 2px; background: #fffde8; color: #111; border: 1px solid #222; font-weight: 700; line-height: 14px; text-align: center; }
.tray { display: flex; align-items: center; gap: 2px; padding: 0 13px 0 10px; border-left: 1px solid #0b3d9c; background: linear-gradient(#0f6fd0, #2fb0f6 2px, #1292ea 6px, #139aee 24px, #0c6cc4); }
.tray time { margin-left: 6px; }
</style>
